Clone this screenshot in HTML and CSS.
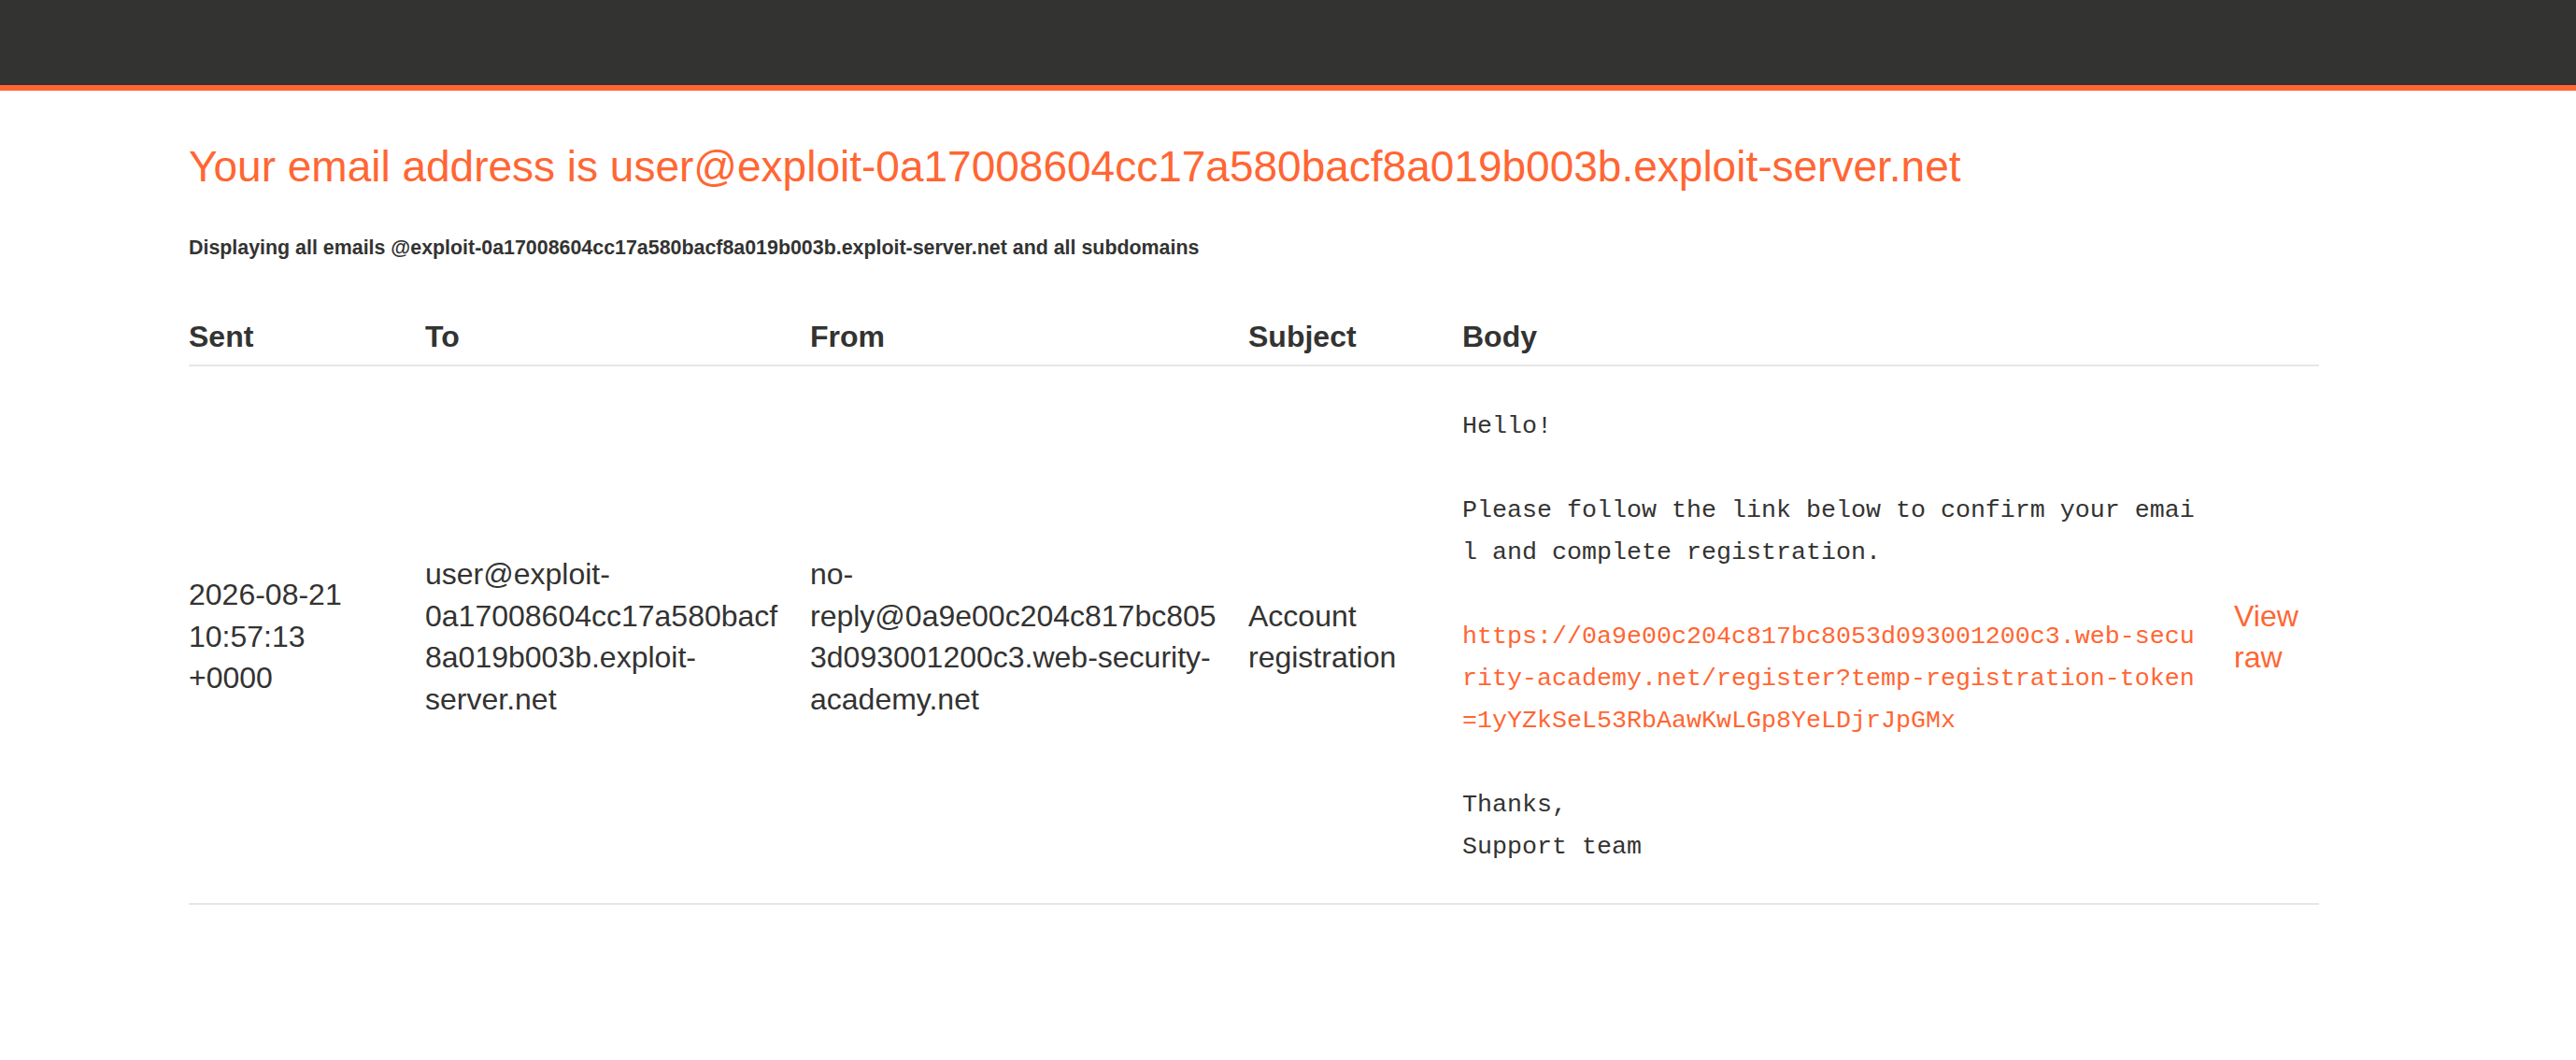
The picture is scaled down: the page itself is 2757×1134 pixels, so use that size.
FILE: index.html
```html
<!DOCTYPE html>
<html lang="en">
<head>
  <meta charset="UTF-8" />
  <meta name="viewport" content="width=device-width, initial-scale=1.0"/>
  <title>Email client</title>
  <link rel="stylesheet" href="styles.css">
</head>
<body>

  <div class="top-bar"></div>

  <div class="container">
    <h1 class="address">Your email address is user@exploit-0a17008604cc17a580bacf8a019b003b.exploit-server.net</h1>
    <h4 class="scope">Displaying all emails @exploit-0a17008604cc17a580bacf8a019b003b.exploit-server.net and all subdomains</h4>

    <table class="emails">
      <colgroup>
        <col class="col-sent">
        <col class="col-to">
        <col class="col-from">
        <col class="col-subject">
        <col class="col-body">
        <col class="col-raw">
      </colgroup>
      <thead>
        <tr>
          <th>Sent</th>
          <th>To</th>
          <th>From</th>
          <th>Subject</th>
          <th>Body</th>
          <th></th>
        </tr>
      </thead>
      <tbody>
        <tr>
          <td class="sent">2026-08-21 10:57:13 +0000</td>
          <td>user@exploit-0a17008604cc17a580bacf8a019b003b.exploit-server.net</td>
          <td>no-reply@0a9e00c204c817bc8053d093001200c3.web-security-academy.net</td>
          <td>Account registration</td>
          <td><pre class="email-body">Hello!

Please follow the link below to confirm your email and complete registration.

<a href="#">https://0a9e00c204c817bc8053d093001200c3.web-security-academy.net/register?temp-registration-token=1yYZkSeL53RbAawKwLGp8YeLDjrJpGMx</a>

Thanks,
Support team</pre></td>
          <td class="raw"><a href="#">View raw</a></td>
        </tr>
      </tbody>
    </table>
  </div>

</body>
</html>
```

FILE: styles.css
```css
body {
  margin: 0;
  font-family: "Liberation Sans", Arial, sans-serif;
  background-color: white;
  color: #333332;
}

a {
  color: #ff6633;
  text-decoration: none;
}

.top-bar {
  height: 91px;
  background-color: #333332;
  border-bottom: 6px solid #ff6633;
}

.container {
  padding-left: 202px;
  width: 2280px;
}

.address {
  margin: 54px 0 0;
  font-size: 46px;
  line-height: 54px;
  font-weight: normal;
  color: #ff6633;
}

.scope {
  margin: 48px 0 0;
  font-size: 21.4px;
  line-height: 25px;
  font-weight: bold;
}

.emails {
  margin-top: 60px;
  width: 2280px;
  border-collapse: collapse;
  table-layout: fixed;
  font-size: 32px;
  line-height: 44.5px;
}

.col-sent { width: 253px; }
.col-to { width: 412px; }
.col-from { width: 469px; }
.col-subject { width: 229px; }
.col-body { width: 826px; }
.col-raw { width: 91px; }

.emails th {
  text-align: left;
  padding: 0 30px 7px 0;
  border-bottom: 2px solid #e6e6e6;
}

.emails td {
  padding: 42px 30px 37px 0;
  vertical-align: middle;
  overflow-wrap: break-word;
  border-bottom: 2px solid #e6e6e6;
}

.emails td.sent {
  padding-right: 45px;
}

.emails td.raw {
  padding-right: 0;
}

.email-body {
  margin: 0;
  width: 49.2ch;
  font-family: "Liberation Mono", "Courier New", monospace;
  font-size: 26.67px;
  line-height: 45px;
  white-space: pre-wrap;
  word-break: break-all;
}
```
